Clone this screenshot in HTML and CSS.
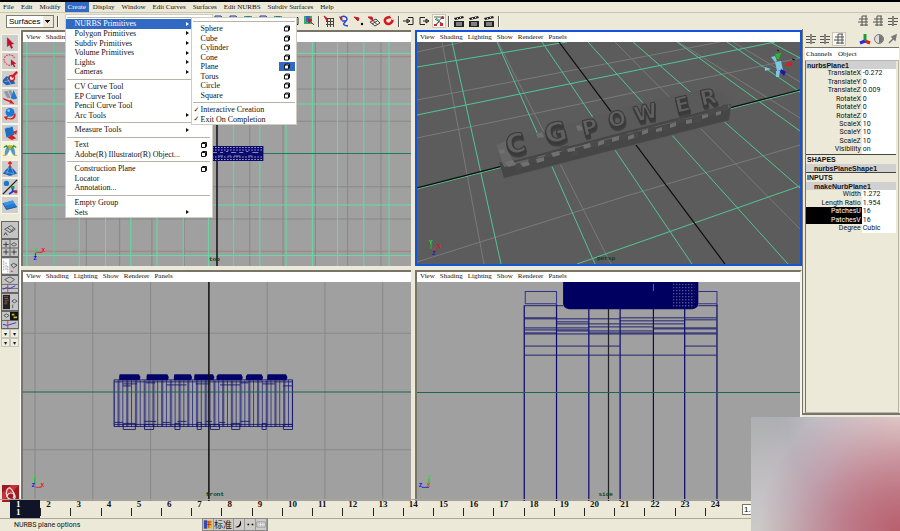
FILE: index.html
```html
<!DOCTYPE html>
<html lang="en">
<head>
<meta charset="utf-8">
<title>Maya</title>
<link rel="stylesheet" href="styles.css">
</head>
<body>
<svg class="defs" aria-hidden="true">
  <symbol id="i-box" viewBox="0 0 6 6"><path d="M1.5 .5h4v4h-1v1h-4v-4h1z" fill="#fff" stroke="#111"/><path d="M1 1.5h3.5V5" fill="none" stroke="#111"/></symbol>
  <symbol id="i-arrow" viewBox="0 0 18 18"><path d="M6 3l7 7-3 .3 2 4-1.500.8-2-4L6 13z" fill="#c8102a" stroke="#7d0a18" stroke-width=".5"/></symbol>
  <symbol id="i-lasso" viewBox="0 0 18 18"><path d="M9 14C4 13 1 9 3 5s10-4 11 1" fill="none" stroke="#e03a48" stroke-width="1.2" stroke-dasharray="2 1"/><path d="M10 7l6 5-2.500.5 1.500 3-1.500.5-1.500-3-2 1.500z" fill="#c8102a"/></symbol>
  <symbol id="i-paint" viewBox="0 0 18 18"><path d="M1 10l4-4 6 1 4 7-10 2-4-3z" fill="#2464b4"/><path d="M3 12l9-2M6 8l4 7" stroke="#9cd0ff" stroke-width=".7"/><circle cx="11" cy="8" r="3" fill="#f4dcd8" stroke="#d21622" stroke-width="1.5"/><path d="M11 7l6-6" stroke="#d21622" stroke-width="2.500"/></symbol>
  <symbol id="i-move" viewBox="0 0 18 18"><path d="M2 3l4 7h4L6 2zM7 2l4 8h3L10 1z" fill="#8d99a6"/><path d="M13 1l4 9c-1 2-6 2-7 0z" fill="#1f7ad0"/><path d="M1 10l8 3 1-1 4 5-6-1 1-1-7-3z" fill="#d8201c"/></symbol>
  <symbol id="i-rotate" viewBox="0 0 18 18"><circle cx="9" cy="6" r="5" fill="#1c78d8"/><circle cx="7.500" cy="4" r="1.500" fill="#8cc8ff"/><path d="M15 7c2 6-5 9-9 6l-1 2-3-4 5-1-1 2c4 2 8 0 7-4z" fill="#d8201c"/></symbol>
  <symbol id="i-scale" viewBox="0 0 18 18"><path d="M3 4l9-2 2 9-9 3z" fill="#1c70c4"/><path d="M3 4l2-2 9-1-2 1z" fill="#7cbcf0"/><path d="M12 8l5-2-1 5zM6 14l5-3 5 4-5 2z" fill="#d8201c"/></symbol>
  <symbol id="i-manip" viewBox="0 0 18 18"><path d="M3 14c0-9 3-11 6-11s6 2 6 11l-3-1-3-6-3 6z" fill="#5e98c8"/><path d="M2 5l3-2 2 3M16 5l-3-2-2 3" fill="none" stroke="#259a3c" stroke-width="1.500"/><path d="M7 3h4l-2 4zM1 14h4M13 14h4" fill="#d8b020" stroke="#d8b020"/><path d="M6 14l3-4 3 4z" fill="#fff"/></symbol>
  <symbol id="i-soft" viewBox="0 0 18 18"><path d="M1 14l4-5c2 0 2-4 4-4s2 4 4 4l4 5-8 3z" fill="#1b67bc"/><path d="M4 12l10 3M8 7l-3 8M10 6l3 8" stroke="#79baf4" stroke-width=".8"/><path d="M9 1v7M7 3l2-2 2 2" stroke="#dc2018" fill="none" stroke-width="1.500"/></symbol>
  <symbol id="i-show" viewBox="0 0 18 18"><path d="M1 17L17 1" stroke="#222" stroke-width="1.500"/><circle cx="5" cy="5" r="3" fill="#1d77cc"/><path d="M12 8v6h5M12 14l-4 3" stroke="#2434cc" fill="none" stroke-width="2"/><path d="M10 8h4v3h-4z" fill="#18a038"/><path d="M14 13h3v3h-3z" fill="#d8201c"/></symbol>
  <symbol id="i-plane" viewBox="0 0 18 18"><path d="M1 7l11-3 5 7-12 3z" fill="#247ad0"/><path d="M1 7l11-3 2 3-11 3z" fill="#3c94e4"/><path d="M1 7l4 7 12-3" fill="none" stroke="#174f94"/></symbol>
  <symbol id="l-one" viewBox="0 0 18 18"><path d="M3 8l7-4 5 4-6 4zM6 6.500l6 4M10 11l3-4" fill="none" stroke="#555"/><path d="M2 15l2-3 2 3" fill="none" stroke="#333"/></symbol>
  <symbol id="l-four" viewBox="0 0 18 18"><path d="M9 0v18M0 9h18" stroke="#555"/><path d="M1.500 5h6M4.500 2v6M1.500 13.500h6M4.500 10.500v6M10.500 13.500h6M13.500 10.500v6" stroke="#333"/><path d="M10.500 5l3-2 3 2-3 2z" fill="none" stroke="#555"/></symbol>
  <symbol id="l-list" viewBox="0 0 18 18"><path d="M0 1h8v16H0z" fill="#fff"/><path d="M2 3v12M4.500 5v8M6.500 9v7" stroke="#8892a8" stroke-dasharray="2 1"/><path d="M10 8l3-2 4 2-4 3z" fill="none" stroke="#444"/><path d="M10 15h2" stroke="#d02020"/></symbol>
  <symbol id="l-graph" viewBox="0 0 18 18"><path d="M3 4l6-3 5 3-5 4z" fill="none" stroke="#555"/><path d="M0 9.500h18M0 14h18" stroke="#667"/><path d="M1 15l4-2 4 1 6-3" stroke="#2434cc" fill="none"/><path d="M6.500 9v9" stroke="#d83048"/></symbol>
  <symbol id="l-hyper" viewBox="0 0 18 18"><path d="M1 1h8v16H1z" fill="#222"/><path d="M2 3h5M3 7h5M2 11h4" stroke="#b04048"/><path d="M3 5h4M3 9h3" stroke="#4c9a58"/><path d="M11 8l3-2 3 2-3 2zM12 12v4" fill="none" stroke="#555"/></symbol>
  <symbol id="l-pgraph" viewBox="0 0 18 18"><path d="M9 0h9v9H9z" fill="#111"/><path d="M11 2h3v2h-3zM13 5h4v2h-4z" fill="#c8c020"/><path d="M2 4l3-2 3 2-3 2z" fill="none" stroke="#555"/><path d="M0 9.500h18" stroke="#555"/><path d="M1 14l5 1 10-3" stroke="#2434cc" fill="none"/><path d="M6.500 9v9" stroke="#d83048"/></symbol>
  <symbol id="i-maya" viewBox="0 0 17 17"><path d="M0 0h17v17H0z" fill="#a01820"/><path d="M0 17V8L9 0h8z" fill="#c8303a"/><path d="M5 12C3 6 6 2 8 3s6 8 5 10-5 2-7 0 0-5 3-5 4 3 2 5" fill="none" stroke="#f4e4e0" stroke-width="1.200"/></symbol>
  <symbol id="t-blue" viewBox="0 0 12 12"><path d="M2 1h6l2 3v7H2z" fill="#b9c8e8" stroke="#2538a8"/><path d="M4 5h4" stroke="#2538a8"/></symbol>
  <symbol id="t-pick" viewBox="0 0 12 12"><path d="M1 1h8v8H1z" fill="#35b06c"/><path d="M3 1h4v6H3z" fill="#3868c8"/><path d="M5 4l6 6M5 4l4 1-3 3z" fill="#c81828" stroke="#c81828"/></symbol>
  <symbol id="t-grid" viewBox="0 0 12 12"><path d="M3 3.500h8M3 6.500h8M3 9.500h8M4.500 3v9M7.500 3v9M10.500 3v9" stroke="#444"/><path d="M1 1l4 3-1 2z" fill="#c81828" stroke="#c81828"/></symbol>
  <symbol id="t-curve" viewBox="0 0 12 12"><path d="M2 3c4-4 9 0 6 3s-4 4 2 5M4 6h4" fill="none" stroke="#2448d0" stroke-width="1.500"/><path d="M1 1l4 3-2 2z" fill="#c81828"/></symbol>
  <symbol id="t-point" viewBox="0 0 12 12"><path d="M1 2l4 4 1-3z" fill="#c81828" stroke="#c81828"/><circle cx="9" cy="9" r="1.200"/></symbol>
  <symbol id="t-plane" viewBox="0 0 12 12"><path d="M2 7l6-3 4 4-5 3zM5 5.500l4 4M4 9l5-3" fill="none" stroke="#444"/><path d="M0 2l5 4-1-4z" fill="#c81828" stroke="#c81828"/></symbol>
  <symbol id="t-magnet" viewBox="0 0 12 12"><path d="M8 2C1 2 1 6 3 8s6 1 7-4" fill="none" stroke="#d8181c" stroke-width="2.500"/><path d="M7 1l2 1M9 4l2 1" stroke="#eee"/></symbol>
  <symbol id="t-in" viewBox="0 0 12 12"><path d="M5 2.500h5v7H5M0 6h6M4 4l3 2-3 2z" fill="none" stroke="#222"/></symbol>
  <symbol id="t-out" viewBox="0 0 12 12"><path d="M7 2.500H2v7h5M5 6h5M8 4l3 2-3 2z" fill="none" stroke="#222"/></symbol>
  <symbol id="t-hist" viewBox="0 0 12 12"><path d="M1 2h10M2 11L10 1M2 4l8 5" stroke="#567" fill="none"/><path d="M1 9h3v2H1zM8 2h3v2H8zM7 8h3v3H7z" fill="#c82838"/><path d="M3 3l4 3-3 3" stroke="#38a048" fill="none"/></symbol>
  <symbol id="t-clap" viewBox="0 0 12 12"><path d="M1 3l9-2 1 2-9 2zM1 6h10v6H1z" fill="#222"/><path d="M3 8h6M3 10h6M4 3l1 1M7 2l1 1" stroke="#ddd"/></symbol>
  <symbol id="t-list" viewBox="0 0 12 12"><path d="M1 3.500h4M1 6.500h4M1 9.500h4M7 3.500h4M7 6.500h4M7 9.500h3" stroke="#555"/><path d="M6 1v10" stroke="#222"/></symbol>
  <symbol id="t-attr" viewBox="0 0 12 12"><path d="M2 4h9M1 7h10M3 10h8M5 1h5M5 1v10M9 1v10" stroke="#555" fill="none"/></symbol>
  <symbol id="t-axis" viewBox="0 0 12 12"><path d="M6 7V1" stroke="#18a030" stroke-width="3"/><path d="M6 8l5 2" stroke="#d02020" stroke-width="3"/><path d="M6 8l-5 2" stroke="#2030d0" stroke-width="3"/></symbol>
  <symbol id="t-half" viewBox="0 0 12 12"><circle cx="6" cy="6" r="4.500" fill="#ddd" stroke="#777"/><path d="M6 2a4 4 0 010 8z" fill="#777"/></symbol>
  <symbol id="t-pen" viewBox="0 0 12 12"><path d="M2 10l4-4M5 4l4-2-1 5z" stroke="#777" fill="#888" stroke-width="1.500"/></symbol>
</svg>

<nav class="menubar">
  <button>File</button><button>Edit</button><button>Modify</button>
  <div class="open">
    <button class="active">Create</button>
    <div class="menu">
      <hr class="tear">
      <button class="active">NURBS Primitives<i class="more"></i></button>
      <button>Polygon Primitives<i class="more"></i></button>
      <button>Subdiv Primitives<i class="more"></i></button>
      <button>Volume Primitives<i class="more"></i></button>
      <button>Lights<i class="more"></i></button>
      <button>Cameras<i class="more"></i></button>
      <hr>
      <button>CV Curve Tool</button>
      <button>EP Curve Tool</button>
      <button>Pencil Curve Tool</button>
      <button>Arc Tools<i class="more"></i></button>
      <hr>
      <button>Measure Tools<i class="more"></i></button>
      <hr>
      <button>Text<svg class="opt"><use href="#i-box"/></svg></button>
      <button>Adobe(R) Illustrator(R) Object...<svg class="opt"><use href="#i-box"/></svg></button>
      <hr>
      <button>Construction Plane<svg class="opt"><use href="#i-box"/></svg></button>
      <button>Locator</button>
      <button>Annotation...</button>
      <hr>
      <button>Empty Group</button>
      <button>Sets<i class="more"></i></button>
      <div class="submenu">
        <hr class="tear">
        <button>Sphere<svg class="opt"><use href="#i-box"/></svg></button>
        <button>Cube<svg class="opt"><use href="#i-box"/></svg></button>
        <button>Cylinder<svg class="opt"><use href="#i-box"/></svg></button>
        <button>Cone<svg class="opt"><use href="#i-box"/></svg></button>
        <button>Plane<svg class="opt hot"><use href="#i-box"/></svg></button>
        <button>Torus<svg class="opt"><use href="#i-box"/></svg></button>
        <button>Circle<svg class="opt"><use href="#i-box"/></svg></button>
        <button>Square<svg class="opt"><use href="#i-box"/></svg></button>
        <hr>
        <button class="checked">Interactive Creation</button>
        <button class="checked">Exit On Completion</button>
      </div>
    </div>
  </div>
  <button>Display</button><button>Window</button><button>Edit Curves</button><button>Surfaces</button><button>Edit NURBS</button><button>Subdiv Surfaces</button><button>Help</button>
</nav>

<div class="statusline">
  <select aria-label="Menu set"><option>Surfaces</option></select>
  <i class="grip"></i>
  <div class="icons files">
    <svg><use href="#t-blue"/></svg><svg><use href="#t-blue"/></svg><svg><use href="#t-pick"/></svg><svg><use href="#t-blue"/></svg><svg><use href="#t-pick"/></svg><svg><use href="#t-in"/></svg><svg><use href="#t-pick"/></svg>
  </div>
  <i class="grip"></i>
  <div class="icons">
    <svg><use href="#t-grid"/></svg><svg><use href="#t-curve"/></svg><svg><use href="#t-point"/></svg><svg><use href="#t-plane"/></svg><svg><use href="#t-magnet"/></svg>
  </div>
  <i class="grip"></i>
  <div class="icons">
    <svg><use href="#t-in"/></svg><svg><use href="#t-out"/></svg><svg class="pressed"><use href="#t-hist"/></svg>
  </div>
  <i class="grip"></i>
  <div class="icons">
    <svg><use href="#t-clap"/></svg><svg><use href="#t-clap"/></svg><svg><use href="#t-clap"/></svg>
  </div>
  <i class="grip"></i>
  <div class="icons right">
    <svg><use href="#t-attr"/></svg><svg><use href="#t-attr"/></svg><svg><use href="#t-list"/></svg>
  </div>
</div>

<main>
  <aside class="toolbox">
    <button aria-label="Select"><svg><use href="#i-arrow"/></svg></button>
    <button aria-label="Lasso"><svg><use href="#i-lasso"/></svg></button>
    <button aria-label="Paint select"><svg><use href="#i-paint"/></svg></button>
    <button aria-label="Move"><svg><use href="#i-move"/></svg></button>
    <button aria-label="Rotate"><svg><use href="#i-rotate"/></svg></button>
    <button aria-label="Scale"><svg><use href="#i-scale"/></svg></button>
    <button aria-label="Manipulator" class="lit"><svg><use href="#i-manip"/></svg></button>
    <button aria-label="Soft modification"><svg><use href="#i-soft"/></svg></button>
    <button aria-label="Show manipulator"><svg><use href="#i-show"/></svg></button>
    <button aria-label="Last tool"><svg><use href="#i-plane"/></svg></button>
    <div class="layouts">
      <button aria-label="Single view"><svg><use href="#l-one"/></svg></button>
      <button aria-label="Four view"><svg><use href="#l-four"/></svg></button>
      <button aria-label="Outliner"><svg><use href="#l-list"/></svg></button>
      <button aria-label="Graph"><svg><use href="#l-graph"/></svg></button>
      <button aria-label="Hypershade"><svg><use href="#l-hyper"/></svg></button>
      <button aria-label="Hypergraph"><svg><use href="#l-pgraph"/></svg></button>
    </div>
    <div class="mini"><button>▾</button><button>▾</button><button>▾</button><button>▾</button></div>
    <svg class="maya"><use href="#i-maya"/></svg>
  </aside>

  <div class="views">
    <section class="view">
      <div class="viewmenu"><button>View</button><button>Shading</button><button>Lighting</button><button>Show</button><button>Renderer</button><button>Panels</button></div>
      <svg class="canvas" viewBox="23 42 388 222" preserveAspectRatio="xMidYMid slice">
        <path class="grid" d="M55.500 42v222M87.500 42v222M120.500 42v222M152.500 42v222M184.500 42v222M249.500 42v222M282.500 42v222M314.500 42v222M346.500 42v222M379.500 42v222M23 88.500h388M23 120.500h388M23 185.500h388M23 217.500h388"/>
        <path d="M23 56.500h388M23 249.500h388" stroke="#a08080"/>
        <path class="nurbs" d="M28.500 42v222M55.500 42v222M80.500 42v222M106.500 42v222M131.500 42v222M157.500 42v222M183.500 42v222M208.500 42v222M233.500 42v222M259.500 42v222M285.500 42v222M311.500 42v222M336.500 42v222M362.500 42v222M387.500 42v222M23 53.500h388M23 103.500h388M23 203.500h388M23 253.500h388"/>
        <path d="M23 152.500h388" stroke="#1f7d56"/>
        <path d="M217 42v222" stroke="#111" stroke-width="1.500"/>
        <path d="M170 145h93v15h-93z" fill="#0a0a70"/>
        <path d="M170 146.500h93M170 149h93M170 156h93M170 158.500h93" stroke="#a9a9c8" stroke-dasharray="1.500 1.500"/>
        <path d="M213 151.500h4m3 0h3m3-1h2m3 1h5m3 0h4m3-1h2m4 1h6M218 155h5m5 0h3m3 0h6m8 0h4" stroke="#8888b4"/>
        <path d="M37 251v5" stroke="#2030ff"/><path d="M38 250.500h6" stroke="#e03030"/>
        <text class="axis" x="35" y="250" fill="#20e030">Y</text><text class="axis" x="43" y="250" fill="#f01010">X</text><text class="axis" x="35" y="258" fill="#1010f0">Z</text>
        <text class="cam" x="209" y="259">top</text>
      </svg>
    </section>

    <section class="view current">
      <div class="viewmenu"><button>View</button><button>Shading</button><button>Lighting</button><button>Show</button><button>Renderer</button><button>Panels</button></div>
      <svg class="canvas dark" viewBox="417 42 383 222" preserveAspectRatio="xMidYMid slice">
        <path class="floor" d="M442 42l42 222M498 42l113 222M615 42l185 187M678 42l122 76M733 42l67 40M417 52l46-10M417 100l303-58M417 138l383-80M417 262l206-65 177-52"/>
        <path class="patch" d="M452 42l49 222M497 42l98 222M542 42l150 222M588 42l200 222M633 42l167 146M677 42l123 89M727 42l73 50M770 42l30 16M417 67l150-25M417 115l358-73M577 264l223-78M417 189l383-98"/>
        <path d="M417 188l383-98M559 42l166 222" stroke="#0c0c0c" fill="none" stroke-width="1.200"/>
        <!-- logo block -->
        <path d="M496 145l60-17 80-24 60-13 29 2 6 14-2 14-225 58-8-32z" fill="#5a5a5a"/>
        <path d="M499 162l5 16 225-58 2-16-226 59z" fill="#464646"/>
        <path d="M496 145l10-4 7 22 213-55v-5l5 4-227 60z" fill="#666"/>
        <g fill="#4a4a4a">
          <path d="M514 165l8-2 3 4-8 3zM528 158l9-2 2 5-9 2zM545 153l7-2v5l-6 2zM560 147l8-2 2 5-8 2zM572 152l6-2v5l-6 2zM590 143l9-2v5l-8 2zM604 141l6-1v6l-6 1zM620 135l7-2v6l-7 1zM633 132l5-1v7l-5 1zM648 127l7-2v5l-7 2zM663 126l5-1v5l-5 1zM676 119l8-2v6l-8 1zM694 116l7-1v7l-7 1zM708 111l8-2v6l-8 1zM722 105l6-1v6l-6 2z"/>
        </g>
        <g class="logo3d"><text x="508 547 584 610 636 677 702" y="155 144 136 128 122 113 106" rotate="-13"><tspan class="near">C</tspan><tspan class="near">G</tspan><tspan>P</tspan><tspan>O</tspan><tspan>W</tspan><tspan>E</tspan><tspan>R</tspan></text></g>
        <g fill="#707070">
          <path d="M505 162l8-2 3 5-8 2zM520 163l8-2 2 4-7 2zM536 159l8-2v4l-7 2zM551 153l8-2 1 4-7 2zM567 149l8-2v4l-7 1zM583 145l7-2 1 4-7 2zM598 142l6-2v4l-6 2zM612 138l7-2v4l-7 2zM628 136l6-2v4l-6 2zM642 131l6-2v4l-6 2zM656 129l6-2v4l-6 1zM670 124l6-2v4l-6 2zM686 120l6-1v4l-6 1zM702 115l6-1v3l-6 2zM716 112l5-1v3l-5 2zM499 150l5-1 1 4-5 1zM536 134l6-2 2 5-6 1zM576 126l4-1 3 5-5 1z"/>
        </g>
        <!-- view compass -->
        <path d="M775 62l6-1 2 9-6 1zM771 57l4-1 2 5-2 1zM765 67l6 2-6 2zM776 71h4l-1 6h-3z" fill="#7cc8e0"/>
        <path d="M775 54l6-1-2 6h-2z" fill="#20c020"/><path d="M784 65l8-4v5z" fill="#e81818"/><path d="M781 69l5 3-2 4-4-4z" fill="#1818b0"/>
        <path d="M777 50l2 1M792 59l3 1" stroke="#111"/>
        <path d="M431 243v6" stroke="#20c030"/><path d="M432 250l6-4" stroke="#e03030"/>
        <text class="axis" x="429" y="244" fill="#20e030">Y</text><text class="axis" x="437" y="248" fill="#e01010">X</text><text class="axis" x="432" y="255" fill="#1818c0">Z</text>
        <text class="cam" x="597" y="260">persp</text>
      </svg>
    </section>

    <section class="view">
      <div class="viewmenu"><button>View</button><button>Shading</button><button>Lighting</button><button>Show</button><button>Renderer</button><button>Panels</button></div>
      <svg class="canvas" viewBox="23 282 388 216" preserveAspectRatio="xMidYMid slice">
        <defs><pattern id="ribs" x="115" width="8.600" height="60" patternUnits="userSpaceOnUse"><path d="M.500 0v60M4.500 0v60M5.500 0v60" stroke="#20207c" stroke-width=".8"/></pattern></defs>
        <path class="grid" d="M37.500 282v216M94.500 282v216M151.500 282v216M266.500 282v216M323.500 282v216M380.500 282v216M23 332.500h388M23 447.500h388"/>
        <path d="M115 379h177v46H115z" fill="url(#ribs)"/>
        <path d="M115.500 378.500h176v46h-176zM116 380.500h175M116 422.500h175M124 382.500h14M167 383.500h20M196 382.500h14M220 383.500h20M262 382.500h12M282 384.500h9M124 384.500h8M147 381.500h9M240 381.500h8M116 420.500h8M145 419.500h12M163 420.500h8M178 419.500h9M206 419.500h6M219 420.500h6M240 419.500h9M124.500 427.500h12v-6h-12zM145.500 427.500h9v-5h-9zM175.500 427.500h5v-6h-5zM197.500 427.500h4v-7h-4zM210.500 427.500h9v-5h-9zM231.500 427.500h8v-6h-8zM261.500 427.500h4v-6h-4zM282.500 427.500h9v-5h-9z" fill="none" stroke="#10106e" stroke-width=".8"/>
        <path d="M121 373h19l1.500 3-1 3h-20v-4zM148 373h20l1.500 3-1 3h-21v-4zM175 373h16l1.500 3-1 3h-17v-4zM195 373h18l1.500 3-1 3h-19v-4zM218 373h23l1.500 3-1 3h-25v-4zM247 373h14l1.500 3-1 3h-16v-4zM267 373h18l1.500 3-1 3h-19v-4z" fill="#040468"/>
        <path d="M23 390.500h388" stroke="#1d664c"/>
        <path d="M209 282v216" stroke="#111" stroke-width="1.500"/>
        <path d="M37 475v6" stroke="#20c030"/><path d="M38 484.500h6" stroke="#e03030"/>
        <text class="axis" x="35" y="476" fill="#20e030">Y</text><text class="axis" x="43" y="484" fill="#f01010">X</text><text class="axis" x="34" y="484" fill="#1010f0">Z</text>
        <text class="cam" x="206" y="493">front</text>
      </svg>
    </section>

    <section class="view">
      <div class="viewmenu"><button>View</button><button>Shading</button><button>Lighting</button><button>Show</button><button>Renderer</button><button>Panels</button></div>
      <svg class="canvas" viewBox="418 281 382 217" preserveAspectRatio="xMidYMid slice">
        <defs><pattern id="mesh" width="3" height="3" patternUnits="userSpaceOnUse"><path d="M1 1h1v1H1z" fill="#a0a0c0"/></pattern></defs>
        <path d="M609 281v217" stroke="#222" stroke-width="1.200"/>
        <path d="M526.500 302.500v-12h31v12M698 290.500h18.500v12M526.500 302.500h31M698 302.500h18.500" fill="none" stroke="#30308a"/>
        <path d="M525.500 304v194M557.500 303v195M589.500 303v195M620.500 303v195M653.500 303v195M684.500 303v195M716.500 303v195" stroke="#0a0a6c" stroke-width="1.200"/>
        <path d="M526 304.500h38M698 304.500h19M526 316.500h31M526 317.500h94M620 316.500h96M684 318.500h32M557 320.500h32M557 322.500h127M620 319.500h64M526 326.500h63M589 325.500h64M653 327.500h63M526 328.500h63M557 329.500h96M653 326.500h63M526 332.500h190M526 331.500h31M589 331.500h127M526 344.500h94M684 344.500h32M526 353.500h190" stroke="#16166e" stroke-width=".9"/>
        <path d="M564 281h134v21q0 5-6 6H570q-6-1-6-6z" fill="#000060"/>
        <path d="M672 281h22v26h-22z" fill="url(#mesh)"/>
        <path d="M653.500 283v7" stroke="#6868a0"/>
        <path d="M418 390.500h382" stroke="#1d664c"/>
        <path d="M431 476v6" stroke="#20c030"/><path d="M424 484.500h7" stroke="#2030d0"/>
        <text class="axis" x="429" y="476" fill="#20e030">Y</text><text class="axis" x="429" y="484" fill="#d05010">X</text><text class="axis" x="421" y="484" fill="#1010f0">Z</text>
        <text class="cam" x="599" y="493">side</text>
      </svg>
    </section>
  </div>

  <aside class="channelbox">
    <div class="chicons">
      <svg><use href="#t-list"/></svg><svg><use href="#t-list"/></svg><svg class="pressed"><use href="#t-attr"/></svg>
      <svg class="push"><use href="#t-axis"/></svg><svg><use href="#t-half"/></svg><svg><use href="#t-pen"/></svg>
    </div>
    <div class="chmenu"><button>Channels</button><button>Object</button></div>
    <div class="channels">
      <table>
        <tr class="node"><th colspan="2">nurbsPlane1</th></tr>
        <tr><td>TranslateX</td><td>-0.272</td></tr>
        <tr><td>TranslateY</td><td>0</td></tr>
        <tr><td>TranslateZ</td><td>0.009</td></tr>
        <tr><td>RotateX</td><td>0</td></tr>
        <tr><td>RotateY</td><td>0</td></tr>
        <tr><td>RotateZ</td><td>0</td></tr>
        <tr><td>ScaleX</td><td>10</td></tr>
        <tr><td>ScaleY</td><td>10</td></tr>
        <tr><td>ScaleZ</td><td>10</td></tr>
        <tr><td>Visibility</td><td>on</td></tr>
        <tr class="head"><th colspan="2">SHAPES</th></tr>
        <tr class="node sub"><th colspan="2">nurbsPlaneShape1</th></tr>
        <tr class="head"><th colspan="2">INPUTS</th></tr>
        <tr class="node sub"><th colspan="2">makeNurbPlane1</th></tr>
        <tr><td>Width</td><td>1.272</td></tr>
        <tr><td>Length Ratio</td><td>1.954</td></tr>
        <tr class="sel"><td>PatchesU</td><td>16</td></tr>
        <tr class="sel"><td>PatchesV</td><td>16</td></tr>
        <tr><td>Degree</td><td>Cubic</td></tr>
      </table>
    </div>
  </aside>
</main>

<div class="timeline">
  <ol>
    <li class="now">1<br>1</li><li>2</li><li>3</li><li>4</li><li>5</li><li>6</li><li>7</li><li>8</li><li>9</li><li>10</li><li>11</li><li>12</li><li>13</li><li>14</li><li>15</li><li>16</li><li>17</li><li>18</li><li>19</li><li>20</li><li>21</li><li>22</li><li>23</li><li>24</li>
  </ol>
  <input type="text" value="1.00" aria-label="Current time">
</div>
<footer class="helpline">NURBS plane options</footer>

<div class="ime">
  <button aria-label="Input method"><svg viewBox="0 0 12 12"><path d="M1 1h10v10H1z" fill="#e8b820"/><path d="M1 1h4v10H1z" fill="#3048b8"/><path d="M5 3h5M5 6h5M7 2v8" stroke="#c02020"/></svg></button>
  <button class="zh">标准</button>
  <button aria-label="Half width"><svg viewBox="0 0 12 12"><path d="M7 1c4 5 0 10-6 8 5 0 7-4 6-8z"/></svg></button>
  <button aria-label="Punctuation"><svg viewBox="0 0 12 12"><path d="M3 5h2v2H3zM8 5h2v2H8z"/></svg></button>
  <button aria-label="Keyboard"><svg viewBox="0 0 12 12"><path d="M1 3h10v6H1z" fill="#eee" stroke="#888"/><path d="M2 5h8M2 7h8" stroke="#888" stroke-dasharray="1 1"/></svg></button>
</div>
<div class="glow"></div>
</body>
</html>
```
FILE: styles.css
```css
* {
  box-sizing: border-box;
}

body {
  margin: 0;
  height: 100vh;
  display: flex;
  flex-direction: column;
  position: relative;
  overflow: hidden;
  background: #ece9d8;
  border-top: 2px solid #000;
  color: #111;
  font: 7px/9px "Liberation Serif", "Noto Sans CJK SC", serif;
}

button {
  font: inherit;
  color: inherit;
  background: none;
  border: none;
  padding: 0;
  text-align: left;
  white-space: nowrap;
}

.defs {
  display: none;
}

/* main menu */
.menubar {
  display: flex;
  gap: 1px;
  height: 10px;
}

.menubar > button,
.open > button {
  padding: 0 3px;
  height: 10px;
}

.open {
  position: relative;
}

.menubar .active {
  background: #316ac5;
  color: #fff;
}

.menu,
.submenu {
  position: absolute;
  z-index: 5;
  display: flex;
  flex-direction: column;
  background: #fff;
  border: 1px solid #d0cdc0;
  font-size: 8px;
}

.menu {
  top: 12px;
  left: 0;
  width: 148px;
  height: 204px;
}

.submenu {
  top: 2px;
  left: 125px;
  width: 106px;
  height: 108px;
}

.menu button {
  flex: 1;
  min-height: 0;
  display: flex;
  align-items: center;
  padding: 0 5px 0 9px;
}

.menu hr {
  flex: 0 0 5px;
  width: 98%;
  margin: 0 auto;
  border: none;
  background: linear-gradient(#b8b5a8, #b8b5a8) center / 100% 1px no-repeat;
}

.menu .tear {
  flex-basis: 4px;
}

.submenu .tear {
  flex-basis: 6px;
}

.more {
  margin-left: auto;
  margin-right: 18px;
  border-left: 3px solid #111;
  border-top: 2px solid transparent;
  border-bottom: 2px solid transparent;
}

.active .more {
  border-left-color: #fff;
}

.opt {
  width: 6px;
  height: 6px;
  margin-left: auto;
}

.submenu button {
  padding: 0 1px 0 9px;
}

.submenu .opt {
  width: 16px;
  height: 9px;
  padding: 1px 5px;
}

.submenu .hot {
  background: #316ac5;
}

.submenu .checked {
  padding-left: 2px;
}

.checked::before {
  content: "✓";
  width: 7px;
  font: bold 7px "DejaVu Sans", sans-serif;
}

/* status line */
.statusline {
  display: flex;
  align-items: center;
  height: 17px;
  padding: 0 1px 0 6px;
  border-top: 1px solid #c8c5b5;
}

.statusline select {
  appearance: none;
  width: 48px;
  height: 13px;
  padding: 0 0 0 2px;
  border: 1px solid #7f7c70;
  border-radius: 0;
  background:
    linear-gradient(#111, #111) right 3px top 4px / 5px 1px no-repeat,
    linear-gradient(#111, #111) right 4px top 5px / 3px 1px no-repeat,
    linear-gradient(#111, #111) right 5px top 6px / 1px 1px no-repeat,
    linear-gradient(90deg, #fff 36px, #ece9d8 36px);
  font: 8px "Liberation Sans", sans-serif;
}

.grip {
  width: 2px;
  height: 11px;
  margin: 0 3px;
  border-left: 1px solid #555;
  border-right: 1px solid #fff;
}

.icons {
  display: flex;
  gap: 3px;
}

.icons svg,
.chicons svg {
  width: 12px;
  height: 12px;
}

.files {
  flex: 0 0 253px;
  justify-content: flex-end;
}

.right {
  margin-left: auto;
}

.pressed {
  background: #f8f7f0;
  outline: 1px solid #cac7b8;
}

/* work area */
main {
  flex: 1;
  min-height: 0;
  display: grid;
  grid-template-columns: 21px 1fr 98px;
}

.toolbox {
  display: flex;
  flex-direction: column;
  padding: 5px 0 0 1px;
  border-right: 1px solid #fff;
}

.toolbox button {
  width: 18px;
  height: 18px;
  background: #d0ceca;
  border: 1px solid #f6f4ea;
}

.toolbox .lit {
  background: #f4f2d0;
}

.toolbox button svg {
  display: block;
  width: 16px;
  height: 16px;
}

.layouts {
  margin-top: 7px;
}

.layouts button {
  display: block;
  background: #c4c4c4;
  border: 1px solid #666;
}

.mini {
  display: grid;
  grid-template-columns: 9px 9px;
}

.toolbox .mini button {
  width: 9px;
  height: 9px;
  background: #f0eee4;
  border: 1px solid #c8c5b5;
  font: 6px/7px "DejaVu Sans", sans-serif;
  text-align: center;
}

.maya {
  width: 17px;
  height: 17px;
  margin: auto 0 1px 1px;
}

.views {
  display: grid;
  grid-template-columns: 390fr 387fr;
  grid-template-rows: 235fr 230fr;
  gap: 4px;
  padding: 1px 0 2px;
}

.view {
  min-height: 0;
  min-width: 0;
  display: flex;
  flex-direction: column;
  border-left: 2px solid #77756a;
  border-top: 2px solid #77756a;
}

.view:last-child {
  border-right: 2px solid #f6f4ea;
}

.view.current {
  border: 2px solid #1053dc;
}

.viewmenu {
  display: flex;
  gap: 5px;
  height: 10px;
  padding-left: 3px;
  background: #fff;
}

.canvas {
  flex: 1;
  min-height: 0;
  width: 100%;
  background: #a0a0a0;
}

.dark {
  background: #5c5c5c;
}

.grid {
  stroke: #888;
}

.nurbs {
  stroke: #62dba6;
}

.floor {
  fill: none;
  stroke: #7a7a7a;
}

.patch {
  fill: none;
  stroke: #52c596;
}

.axis {
  font: bold 6px "Liberation Mono", monospace;
}

.cam {
  font: bold 6px "Liberation Mono", monospace;
  fill: #0b3d1b;
}

.logo3d {
  font: bold 21px "DejaVu Sans", sans-serif;
  fill: #606060;
  stroke: #3a3a3a;
  filter: drop-shadow(0 2px 0 #3a3a3a) drop-shadow(1px 2px 0 #3f3f3f);
}

.near {
  font-size: 27px;
}

/* channel box */
.channelbox {
  display: flex;
  flex-direction: column;
  height: 386px;
  padding: 3px 1px 0 2px;
  border-left: 1px solid #77756a;
  border-bottom: 2px solid #77756a;
}

.chicons {
  display: flex;
  gap: 2px;
  height: 15px;
  padding-top: 1px;
}

.push {
  margin-left: auto;
}

.chmenu {
  display: flex;
  gap: 6px;
  height: 13px;
  padding: 1px;
  background: #fff;
  border-top: 1px solid #77756a;
}

.channels {
  flex: 1;
  padding-right: 2px;
  border: 1px solid #b8b5a8;
  border-left-color: #77756a;
}

.channels table {
  width: 100%;
  height: 172px;
  border-collapse: collapse;
  font: 7px/7px Roboto, sans-serif;
}

.channels td,
.channels th {
  padding: 0 1px;
}

.channels td:first-child {
  width: 62%;
  text-align: right;
}

.channels td:last-child {
  background: #fff;
}

.channels th {
  text-align: left;
  font: bold 7px/7px "Liberation Sans", sans-serif;
}

.node {
  background: #d0d0d0;
}

.channels .sub th {
  padding-left: 8px;
}

.head {
  border-top: 1px solid #444;
}

.sel td:first-child {
  background: #000;
  color: #fff;
}

/* time slider */
.timeline {
  display: flex;
  align-items: center;
  height: 20px;
  padding-left: 10px;
  border-top: 1px solid #aaa797;
  border-bottom: 1px solid #aaa797;
}

.timeline ol {
  flex: 0 0 725px;
  display: grid;
  grid-template-columns: repeat(24, 1fr);
  height: 18px;
  margin: 0;
  padding: 0;
  list-style: none;
  font: bold 9px/8px "Liberation Serif", serif;
}

.timeline li {
  padding-left: 6px;
  background: linear-gradient(#222, #222) left bottom 2px / 1px 8px no-repeat;
}

.timeline .now {
  background: #101428;
  color: #fff;
}

.timeline input {
  width: 40px;
  height: 11px;
  margin-left: 7px;
  padding: 0 1px;
  border: 1px solid #77756a;
  font: 8px "Liberation Sans", sans-serif;
}

.helpline {
  height: 12px;
  padding-left: 14px;
  font: 7px/12px Roboto, sans-serif;
}

.ime {
  position: absolute;
  left: 202px;
  bottom: 0;
  display: flex;
  height: 13px;
  background: #cfcdc6;
  border: 1px solid #888;
}

.ime button {
  width: 11px;
  border-right: 1px solid #999;
}

.ime .zh {
  width: 20px;
  font: 9px/11px "Noto Sans CJK SC", sans-serif;
}

.ime svg {
  display: block;
  width: 10px;
  height: 11px;
}

/* soft colour patch in the corner */
.glow {
  position: absolute;
  right: 0;
  bottom: 0;
  width: 149px;
  height: 114px;
  background:
    radial-gradient(circle at 100% 100%, #b9606e 0, #b9606e00 75%),
    radial-gradient(circle at 100% 0, #e6deda 0, #e6deda00 60%),
    radial-gradient(circle at 0 100%, #cccac8 0, #cccac800 60%),
    linear-gradient(130deg, #aeafb2 10%, #bbb4c6 50%, #c4a2b4 75%);
}
```
